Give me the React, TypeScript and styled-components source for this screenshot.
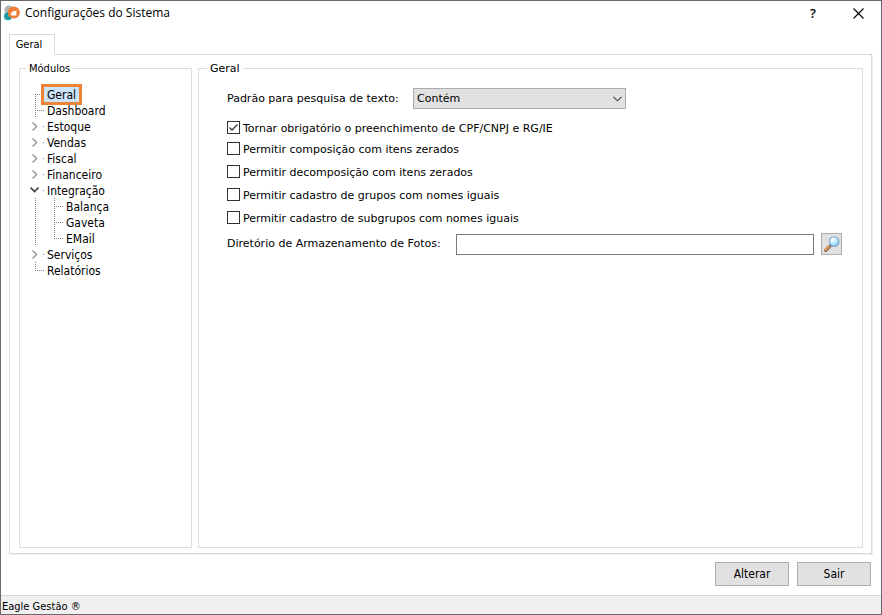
import React, { useState } from "react";
import styled, { createGlobalStyle } from "styled-components";

const GlobalStyle = createGlobalStyle`
  *, *::before, *::after { box-sizing: border-box; }
  html, body, #root { height: 100%; }
  body { margin: 0; background: #fff; color: #000; }
  button, input, select { font: inherit; color: inherit; }
`;

const condensed = `"DejaVu Sans Condensed", "DejaVu Sans", sans-serif`;
const wide = `"DejaVu Sans", sans-serif`;

const Window = styled.div`
  display: flex;
  flex-direction: column;
  min-height: 100vh;
  border: 1px solid #6b696b;
  font: 12px/16px ${condensed};
`;

const TitleBar = styled.header`
  display: flex;
  align-items: center;
  gap: 5px;
  height: 24px;
  padding: 0 13px 0 3px;
  font: 12px/16px "Open Sans", sans-serif;
`;

const Title = styled.h1`
  flex: 1;
  margin: 0;
  font: inherit;
`;

const TitleButton = styled.button`
  display: flex;
  align-items: center;
  justify-content: center;
  width: 20px;
  height: 20px;
  padding: 0;
  border: 0;
  background: none;
  font-size: 13px;
  font-weight: 600;
  &:last-child { margin-left: 20px; }
`;

const Body = styled.main`
  flex: 1;
  display: flex;
  flex-direction: column;
  padding: 9px 9px 0 8px;
`;

const TabList = styled.div`
  display: flex;
`;

const Tab = styled.button`
  height: 21px;
  width: 46px;
  margin-bottom: -1px;
  padding: 0 6px 0 0;
  border: 1px solid #d9d9d9;
  border-bottom-color: #fff;
  background: #fff;
  font-size: 11px;
  z-index: 1;
`;

const TabPage = styled.section`
  flex: 1;
  display: flex;
  gap: 6px;
  padding: 5px 8px 5px 9px;
  border: 1px solid #d9d9d9;
  box-shadow: 1px 1px 0 #f0f0f0;
`;

const Group = styled.fieldset<{ $fixed?: boolean }>`
  flex: ${(p) => (p.$fixed ? "0 0 173px" : "1")};
  min-width: 0;
  margin: 0;
  padding: 0;
  border: 1px solid #dcdcdc;
  font-family: ${(p) => (p.$fixed ? condensed : wide)};
  font-size: ${(p) => (p.$fixed ? "12px" : "11px")};
`;

const Legend = styled.legend<{ $small?: boolean }>`
  margin-left: ${(p) => (p.$small ? "6px" : "8px")};
  padding: 0 3px;
  height: 16px;
  font-size: 11px;
  line-height: 18px;
`;

const Tree = styled.ul`
  margin: 0;
  padding: 10px 0 0 8px;
  list-style: none;
`;

const TreeRow = styled.li`
  display: flex;
  height: 16px;
`;

const NodeLabel = styled.span<{ $selected?: boolean }>`
  line-height: 18px;
  ${(p) =>
    p.$selected &&
    `
    height: 15px;
    margin: 1px 0 0 -3px;
    padding: 0 3px;
    line-height: 16px;
    background: #cce4f7;
    outline: 3px solid #ee8336;
    z-index: 1;
  `}
`;

const BranchIcon = styled.svg`
  flex: none;
  width: 19px;
  height: 16px;
  fill: none;
  overflow: hidden;
`;

type Link = "first" | "middle" | "last" | "closed" | "open" | "through";

const vertical: Partial<Record<Link, string>> = {
  first: "M7.5 8V16",
  middle: "M7.5 0V16",
  last: "M7.5 0V8",
  through: "M7.5 0V16",
};

function Branch({ link }: { link: Link }) {
  const line = vertical[link];
  return (
    <BranchIcon viewBox="0 0 19 16" aria-hidden="true">
      {line && <path d={line} stroke="#808080" strokeDasharray="1 1" />}
      {line && link !== "through" && (
        <path d="M7 8.5H16" stroke="#808080" strokeDasharray="1 1" />
      )}
      {link === "closed" && (
        <path d="M4.5 4.5L8.5 8.5L4.5 12.5" stroke="#a0a0a0" strokeWidth="1.7" />
      )}
      {link === "open" && (
        <path d="M2.5 5.5L6.5 9.5L10.5 5.5" stroke="#404040" strokeWidth="1.7" />
      )}
      {!line && <path d="M15 8.5H16" stroke="#808080" />}
    </BranchIcon>
  );
}

const nodes: { label: string; links: Link[] }[] = [
  { label: "Geral", links: ["first"] },
  { label: "Dashboard", links: ["middle"] },
  { label: "Estoque", links: ["closed"] },
  { label: "Vendas", links: ["closed"] },
  { label: "Fiscal", links: ["closed"] },
  { label: "Financeiro", links: ["closed"] },
  { label: "Integração", links: ["open"] },
  { label: "Balança", links: ["through", "middle"] },
  { label: "Gaveta", links: ["through", "middle"] },
  { label: "EMail", links: ["through", "last"] },
  { label: "Serviços", links: ["closed"] },
  { label: "Relatórios", links: ["last"] },
];

const Form = styled.div`
  display: flex;
  flex-direction: column;
  padding: 12px 20px 0 28px;
`;

const Field = styled.div`
  display: flex;
  align-items: center;
  gap: 7px;
`;

const FieldLabel = styled.label<{ $width: number }>`
  flex: 0 0 ${(p) => p.$width}px;
`;

const SelectBox = styled.span`
  display: grid;
  width: 213px;
  align-items: center;
  > * { grid-area: 1 / 1; }
  > svg { justify-self: end; margin-right: 4px; pointer-events: none; }
`;

const Select = styled.select`
  appearance: none;
  width: 100%;
  height: 21px;
  padding: 0 20px 0 3px;
  border: 1px solid #acacac;
  border-radius: 0;
  background: #e1e1e1;
`;

const Checks = styled.div`
  display: flex;
  flex-direction: column;
  gap: 7px;
  margin: 11px 0 7px;
`;

const CheckRow = styled.label`
  display: flex;
  gap: 3px;
  height: 16px;
  line-height: 17px;
  &:first-child { margin-bottom: -2px; }
`;

const CheckBox = styled.span`
  display: grid;
  flex: none;
  width: 13px;
  height: 13px;
  margin-top: 1px;
  > * { grid-area: 1 / 1; }
  > svg { pointer-events: none; z-index: 1; }
`;

const CheckInput = styled.input`
  appearance: none;
  width: 13px;
  height: 13px;
  margin: 0;
  border: 1px solid #333;
  background: #fff;
`;

const TextInput = styled.input`
  flex: 1;
  min-width: 0;
  height: 21px;
  padding: 0 3px;
  border: 1px solid #7a7a7a;
  background: #fff;
`;

const IconButton = styled.button`
  display: flex;
  align-items: center;
  justify-content: center;
  width: 21px;
  height: 22px;
  padding: 0;
  border: 1px solid #adadad;
  background: #e1e1e1;
`;

const Actions = styled.div`
  display: flex;
  justify-content: flex-end;
  gap: 8px;
  padding: 8px 1px 9px;
`;

const ActionButton = styled.button`
  width: 74px;
  height: 24px;
  padding: 0;
  border: 1px solid #adadad;
  background: #e1e1e1;
  font-size: 12px;
`;

const StatusBar = styled.footer`
  height: 19px;
  padding: 1px 1px 0;
  border-top: 1px solid #d7d7d7;
  background: #f0f0f0;
  font-size: 11px;
  line-height: 19px;
`;

function AppLogo() {
  return (
    <svg width="16" height="16" viewBox="0 0 16 16" aria-hidden="true">
      <circle cx="5" cy="5" r="4.6" fill="#b1b3b4" />
      <circle cx="4" cy="11.3" r="4" fill="#1c9aa5" />
      <circle cx="9.8" cy="7.5" r="6" fill="#ef7f36" />
      <path d="M7 10.4V7.6L8.4 7.2L9.6 5.8L10.8 6.2L12.4 5.2V10.4Z" fill="#fff" />
    </svg>
  );
}

function Magnifier() {
  return (
    <svg width="17" height="18" viewBox="0 0 17 18" aria-hidden="true">
      <defs>
        <radialGradient id="lens" cx="0.4" cy="0.35" r="0.7">
          <stop offset="0" stopColor="#f2fcff" />
          <stop offset="0.6" stopColor="#aee2fa" />
          <stop offset="1" stopColor="#65b4ea" />
        </radialGradient>
      </defs>
      <path d="M2.6 15.4L7 11" stroke="#8b5c3a" strokeWidth="3.2" strokeLinecap="round" />
      <path d="M2.4 14.9L6.5 10.8" stroke="#efa45a" strokeWidth="1.8" strokeLinecap="round" />
      <path d="M6.6 11.4L8.2 9.8" stroke="#777f89" strokeWidth="2" />
      <circle cx="11.2" cy="6.6" r="4.8" fill="url(#lens)" stroke="#7fa7cf" strokeWidth="1.1" />
      <path d="M8.3 6.2A3 3 0 0 1 11.5 3.5" fill="none" stroke="#fff" strokeWidth="1.2" />
    </svg>
  );
}

function Check({ label, initial = false }: { label: string; initial?: boolean }) {
  const [checked, setChecked] = useState(initial);
  return (
    <CheckRow>
      <CheckBox>
        <CheckInput
          type="checkbox"
          checked={checked}
          onChange={(e) => setChecked(e.target.checked)}
        />
        {checked && (
          <svg width="13" height="13" viewBox="0 0 13 13" aria-hidden="true">
            <path d="M2.5 6.5L5 9L10.5 3.5" fill="none" stroke="#333" strokeWidth="1.3" />
          </svg>
        )}
      </CheckBox>
      {label}
    </CheckRow>
  );
}

export default function App() {
  return (
    <Window>
      <GlobalStyle />
      <TitleBar>
        <AppLogo />
        <Title>Configurações do Sistema</Title>
        <TitleButton aria-label="Ajuda">?</TitleButton>
        <TitleButton aria-label="Fechar">
          <svg width="11" height="11" viewBox="0 0 11 11" aria-hidden="true">
            <path d="M0.5 0.5L10.5 10.5M10.5 0.5L0.5 10.5" stroke="#000" strokeWidth="1.1" />
          </svg>
        </TitleButton>
      </TitleBar>
      <Body>
        <TabList role="tablist">
          <Tab role="tab" aria-selected="true">Geral</Tab>
        </TabList>
        <TabPage role="tabpanel">
          <Group $fixed>
            <Legend $small>Módulos</Legend>
            <Tree>
              {nodes.map((node, i) => (
                <TreeRow key={node.label}>
                  {node.links.map((link, k) => (
                    <Branch key={k} link={link} />
                  ))}
                  <NodeLabel $selected={i === 0}>{node.label}</NodeLabel>
                </TreeRow>
              ))}
            </Tree>
          </Group>
          <Group>
            <Legend>Geral</Legend>
            <Form>
              <Field>
                <FieldLabel htmlFor="pattern" $width={179}>
                  Padrão para pesquisa de texto:
                </FieldLabel>
                <SelectBox>
                  <Select id="pattern">
                    <option>Contém</option>
                  </Select>
                  <svg width="9" height="6" viewBox="0 0 9 6" aria-hidden="true">
                    <path d="M0.5 0.8L4.5 4.8L8.5 0.8" fill="none" stroke="#444" strokeWidth="1.1" />
                  </svg>
                </SelectBox>
              </Field>
              <Checks>
                <Check label="Tornar obrigatório o preenchimento de CPF/CNPJ e RG/IE" initial />
                <Check label="Permitir composição com itens zerados" />
                <Check label="Permitir decomposição com itens zerados" />
                <Check label="Permitir cadastro de grupos com nomes iguais" />
                <Check label="Permitir cadastro de subgrupos com nomes iguais" />
              </Checks>
              <Field>
                <FieldLabel htmlFor="folder" $width={222}>
                  Diretório de Armazenamento de Fotos:
                </FieldLabel>
                <TextInput id="folder" type="text" />
                <IconButton aria-label="Procurar">
                  <Magnifier />
                </IconButton>
              </Field>
            </Form>
          </Group>
        </TabPage>
        <Actions>
          <ActionButton>Alterar</ActionButton>
          <ActionButton>Sair</ActionButton>
        </Actions>
      </Body>
      <StatusBar>Eagle Gestão ®</StatusBar>
    </Window>
  );
}
